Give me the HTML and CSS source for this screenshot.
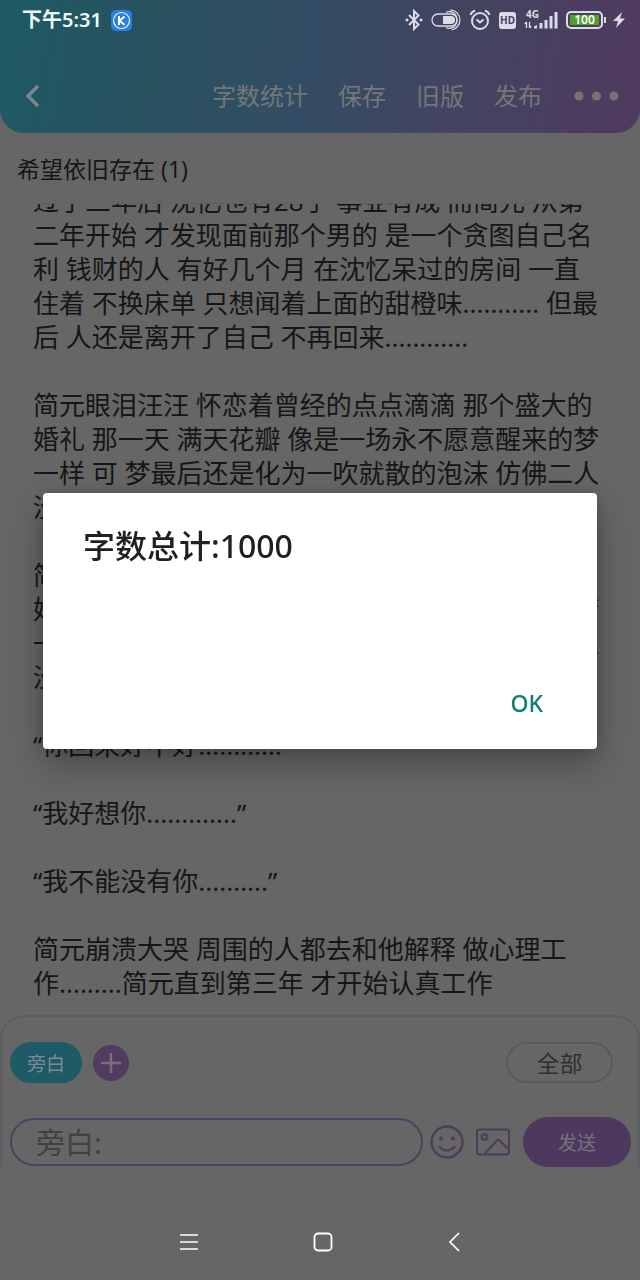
FILE: index.html
```html
<!DOCTYPE html>
<html lang="zh-CN">
<head>
<meta charset="utf-8">
<meta name="viewport" content="width=device-width, initial-scale=1">
<title>希望依旧存在 (1)</title>
<link rel="stylesheet" href="styles.css">
</head>
<body>
<div class="app">
  <header class="header">
    <div class="status">
      <span class="status-time">下午5:31</span>
      <svg class="status-app" width="21" height="21" viewBox="0 0 21 21" aria-hidden="true">
        <rect width="21" height="21" rx="5" fill="#2b7fe0"/>
        <circle cx="10.500" cy="10.500" r="8" fill="none" stroke="#e6f2ff" stroke-width="1.200"/>
        <path d="M8 6v9M13.500 6.500l-5 4.200 5 4" fill="none" stroke="#fff" stroke-width="2"/>
      </svg>
      <div class="status-icons">
        <svg width="18" height="22" viewBox="0 0 18 22" aria-hidden="true">
          <path d="M4 6l9.500 9.500-4.500 4.500V2l4.500 4.500L4 16" fill="none" stroke="#dcdce8" stroke-width="2"/>
          <circle cx="2" cy="11" r="1.500" fill="#dcdce8"/><circle cx="16" cy="11" r="1.500" fill="#dcdce8"/>
        </svg>
        <svg width="30" height="22" viewBox="0 0 30 22" aria-hidden="true">
          <rect x="1" y="5" width="25" height="12" rx="6" fill="none" stroke="#dcdce8" stroke-width="1.300"/>
          <path d="M12 7h8a4 4 0 0 1 0 8h-8z" fill="#dcdce8"/>
          <path d="M15 3.500c5-2.500 11 1 11 7.500s-6 10-11 7.500M19 1c6 0 10 5 10 10s-4 9-8 10" fill="none" stroke="#dcdce8" stroke-width="1.200"/>
        </svg>
        <svg width="22" height="22" viewBox="0 0 22 22" aria-hidden="true">
          <circle cx="11" cy="12" r="8" fill="none" stroke="#dcdce8" stroke-width="2"/>
          <path d="M7.500 10.500l3.500 3 3.500-3M1.500 6c.8-2.200 2.200-3.600 4.500-4.500M20.500 6c-.8-2.200-2.200-3.600-4.500-4.500" fill="none" stroke="#dcdce8" stroke-width="2"/>
        </svg>
        <span class="hd">HD</span>
        <span class="signal">
          <span class="signal-label">4G</span>
          <svg width="34" height="20" viewBox="0 0 34 20" aria-hidden="true">
            <path d="M2.500 12v6M.8 14l1.700-2M5.500 12v6M7.200 16l-1.700 2" stroke="#dcdce8" stroke-width="1.300" fill="none"/>
            <path d="M10 18.500v-2l3-1.500v3.500zM15.500 13h3v5.500h-3zM20.500 10h3v8.500h-3zM25.500 6h3v12.500h-3zM30.500 2h3v16.500h-3z" fill="#dcdce8"/>
          </svg>
        </span>
        <span class="battery">100</span>
        <svg width="12" height="18" viewBox="0 0 12 18" aria-hidden="true">
          <path d="M9 1L0 10h5L3 17l9-9.500H7z" fill="#dcdce8"/>
        </svg>
      </div>
    </div>
    <nav class="toolbar">
      <button class="plain back" type="button" aria-label="返回">
        <svg width="16" height="24" viewBox="0 0 16 24" aria-hidden="true"><path d="M14 2L4 12l10 10" fill="none" stroke="#7e8688" stroke-width="3.500"/></svg>
      </button>
      <button class="plain tool" type="button">字数统计</button>
      <button class="plain tool" type="button">保存</button>
      <button class="plain tool" type="button">旧版</button>
      <button class="plain tool" type="button">发布</button>
      <button class="plain more" type="button" aria-label="更多">
        <svg width="48" height="10" viewBox="0 0 48 10" aria-hidden="true"><g fill="#777275"><circle cx="7" cy="5" r="4.500"/><circle cx="24.500" cy="5" r="4.500"/><circle cx="42" cy="5" r="4.500"/></g></svg>
      </button>
    </nav>
  </header>

  <h1 class="chapter">希望依旧存在 (1)</h1>

  <main class="reader">
    <p>过了三年后 沈忆也有28了 事业有成 而简元 从第<br>二年开始 才发现面前那个男的 是一个贪图自己名<br>利 钱财的人 有好几个月 在沈忆呆过的房间 一直<br>住着 不换床单 只想闻着上面的甜橙味........... 但最<br>后 人还是离开了自己 不再回来............</p>
    <p>简元眼泪汪汪 怀恋着曾经的点点滴滴 那个盛大的<br>婚礼 那一天 满天花瓣 像是一场永不愿意醒来的梦<br>一样 可 梦最后还是化为一吹就散的泡沫 仿佛二人<br>没有相遇过</p>
    <p>简元眼泪汪汪 怀恋着曾经的点点滴滴 那个盛大的<br>婚礼 那一天 满天花瓣 像是一场永不愿意醒来的梦<br>一样 可 梦最后还是化为一吹就散的泡沫 仿佛二人<br>没有相遇过</p>
    <p>“你回来好不好............”</p>
    <p>“我好想你.............”</p>
    <p>“我不能没有你..........”</p>
    <p>简元崩溃大哭 周围的人都去和他解释 做心理工<br>作.........简元直到第三年 才开始认真工作</p>
  </main>

  <form class="composer">
    <div class="roles">
      <button class="role" type="button">旁白</button>
      <button class="plain add" type="button" aria-label="添加角色">
        <svg width="36" height="36" viewBox="0 0 36 36" aria-hidden="true"><circle cx="18" cy="18" r="18" fill="#513c60"/><path d="M8 18h20M18 8v20" stroke="#777079" stroke-width="2.500"/></svg>
      </button>
      <button class="all" type="button">全部</button>
    </div>
    <div class="entry">
      <input class="message" type="text" placeholder="旁白:" aria-label="旁白">
      <button class="plain" type="button" aria-label="表情">
        <svg width="34" height="34" viewBox="0 0 34 34" aria-hidden="true"><circle cx="17" cy="17" r="15.500" fill="none" stroke="#4b3d5b" stroke-width="2.400"/><circle cx="11" cy="13.500" r="2" fill="#4b3d5b"/><circle cx="23" cy="13.500" r="2" fill="#4b3d5b"/><path d="M9.500 22c4.500 4.500 10.500 4.500 15 0" fill="none" stroke="#4b3d5b" stroke-width="2" stroke-linecap="round"/></svg>
      </button>
      <button class="plain picture" type="button" aria-label="图片">
        <svg width="34" height="28" viewBox="0 0 34 28" aria-hidden="true"><g fill="none" stroke="#4b3d5b" stroke-width="2"><rect x="1" y="1.500" width="32" height="25" rx="2.500"/><circle cx="8.500" cy="9" r="2.800"/><path d="M8.500 26L21 12.500q1.200-1.400 2.600 0L33 22"/></g></svg>
      </button>
      <button class="send" type="submit">发送</button>
    </div>
  </form>

  <nav class="system">
    <button class="plain" type="button" aria-label="菜单"><svg width="18" height="18" viewBox="0 0 18 18" aria-hidden="true"><path d="M0 2h18M0 9h18M0 16h18" stroke="#fff" stroke-width="1.700"/></svg></button>
    <button class="plain" type="button" aria-label="主页"><svg width="20" height="20" viewBox="0 0 20 20" aria-hidden="true"><rect x="1.500" y="1.500" width="17" height="17" rx="3.500" fill="none" stroke="#fff" stroke-width="1.800"/></svg></button>
    <button class="plain" type="button" aria-label="后退"><svg width="12" height="20" viewBox="0 0 12 20" aria-hidden="true"><path d="M11 1L2 10l9 9" fill="none" stroke="#fff" stroke-width="1.700"/></svg></button>
  </nav>
</div>

<div class="overlay">
  <section class="dialog" role="alertdialog" aria-modal="true" aria-labelledby="dialog-title">
    <h2 class="dialog-title" id="dialog-title">字数总计:1000</h2>
    <button class="plain ok" type="button">OK</button>
  </section>
</div>
</body>
</html>
```

FILE: styles.css
```css
* {
  box-sizing: border-box;
}

body {
  margin: 0;
  background: #666;
  color: #161616;
  font-family: "Noto Sans", "Noto Sans CJK SC", sans-serif;
}

button,
input {
  font-family: inherit;
}

svg {
  display: block;
}

.plain {
  padding: 0;
  border: 0;
  background: none;
}

.app {
  display: flex;
  flex-direction: column;
  height: 100vh;
}

/* Header */
.header {
  padding-bottom: 16px;
  border-radius: 0 0 24px 24px;
  background: linear-gradient(100deg, #1e5a64 0%, #29525f 24%, #344c65 48%, #424460 70%, #513a60 100%);
}

.status {
  display: flex;
  align-items: center;
  height: 40px;
  padding: 0 15px 0 22px;
}

.status-time {
  color: #eef8fa;
  font-size: 20px;
  font-weight: 600;
  line-height: 24px;
}

.status-app {
  margin-left: 9px;
}

.status-icons {
  display: flex;
  align-items: center;
  gap: 8px;
  margin-left: auto;
}

.hd {
  width: 17px;
  border-radius: 3px;
  background: #dcdce8;
  color: #41455f;
  font-size: 10px;
  font-weight: 700;
  line-height: 17px;
  text-align: center;
}

.signal {
  position: relative;
}

.signal-label {
  position: absolute;
  top: -2px;
  left: 2px;
  color: #dcdce8;
  font-size: 10px;
  font-weight: 700;
  line-height: 12px;
}

.battery {
  position: relative;
  width: 37px;
  margin-right: 2px;
  border: 2px solid #dcdce8;
  border-radius: 5px;
  background: #52a02c;
  box-shadow: inset 0 0 0 2px #47435f;
  color: #fff;
  font-size: 12px;
  font-weight: 600;
  line-height: 14px;
  text-align: center;
}

.battery::after {
  content: "";
  position: absolute;
  top: 4px;
  right: -5px;
  width: 2px;
  height: 6px;
  background: #dcdce8;
}

.toolbar {
  display: flex;
  align-items: center;
  gap: 30px;
  height: 77px;
  padding: 35px 20px 0 24px;
}

.back {
  margin-right: auto;
}

.tool {
  color: #747779;
  font-size: 24px;
  line-height: 36px;
}

.chapter {
  margin: 0;
  padding: 19px 17px 17px;
  border-bottom: 1px solid #606060;
  font-size: 23px;
  font-weight: 400;
  line-height: 34px;
}

/* Story text, scrolled to its end */
.reader {
  display: flex;
  flex: 1 1 0;
  flex-direction: column;
  justify-content: flex-end;
  gap: 34px;
  min-height: 0;
  padding: 0 33px 15px;
  overflow: hidden;
  font-size: 26px;
  line-height: 34px;
  white-space: nowrap;
}

.reader p {
  flex: none;
  margin: 0;
}

/* Message composer */
.composer {
  padding: 25px 7px 0 8px;
  border: 2px solid #5e5e60;
  border-bottom: 0;
  border-radius: 24px 24px 0 0;
}

.roles {
  display: flex;
  align-items: center;
  gap: 11px;
  padding: 0 18px 16px 0;
  border-bottom: 1px solid #636363;
}

.role {
  width: 72px;
  height: 41px;
  padding: 0;
  border: 0;
  border-radius: 21px;
  background: #1f5a67;
  color: #7b8c90;
  font-size: 19px;
}

.all {
  width: 107px;
  height: 41px;
  margin-left: auto;
  padding: 0;
  border: 2px solid #5a5a5a;
  border-radius: 21px;
  background: none;
  color: #303030;
  font-size: 23px;
  line-height: 34px;
}

.entry {
  display: flex;
  align-items: center;
  padding-top: 17px;
}

.message {
  flex: 1;
  min-width: 0;
  height: 48px;
  margin-right: 7px;
  padding: 0 24px;
  border: 2px solid #4f405f;
  border-radius: 24px;
  background: none;
  color: #161616;
  font-size: 29px;
}

.message::placeholder {
  color: #414141;
  opacity: 1;
}

.picture {
  margin: 0 13px 0 12px;
}

.send {
  width: 108px;
  height: 50px;
  padding: 0;
  border: 0;
  border-radius: 25px;
  background: #4e395e;
  color: #7a707d;
  font-size: 19px;
}

.system {
  display: flex;
  justify-content: center;
  align-items: center;
  gap: 18%;
  height: 113px;
  padding-top: 36px;
}

/* Word count dialog */
.overlay {
  position: fixed;
  inset: 0;
  display: flex;
  align-items: center;
  padding: 0 43px 38px;
}

.dialog {
  display: flex;
  flex: 1;
  flex-direction: column;
  gap: 116px;
  padding: 29px 54px 28px 40px;
  border-radius: 4px;
  background: #fff;
  box-shadow: 0 14px 34px rgba(0, 0, 0, 0.3), 0 0 12px rgba(0, 0, 0, 0.15);
}

.dialog-title {
  margin: 0;
  color: #202020;
  font-size: 32px;
  font-weight: 500;
  line-height: 48px;
}

.ok {
  align-self: flex-end;
  color: #11806b;
  font-size: 23px;
  font-weight: 500;
  line-height: 35px;
}
```
